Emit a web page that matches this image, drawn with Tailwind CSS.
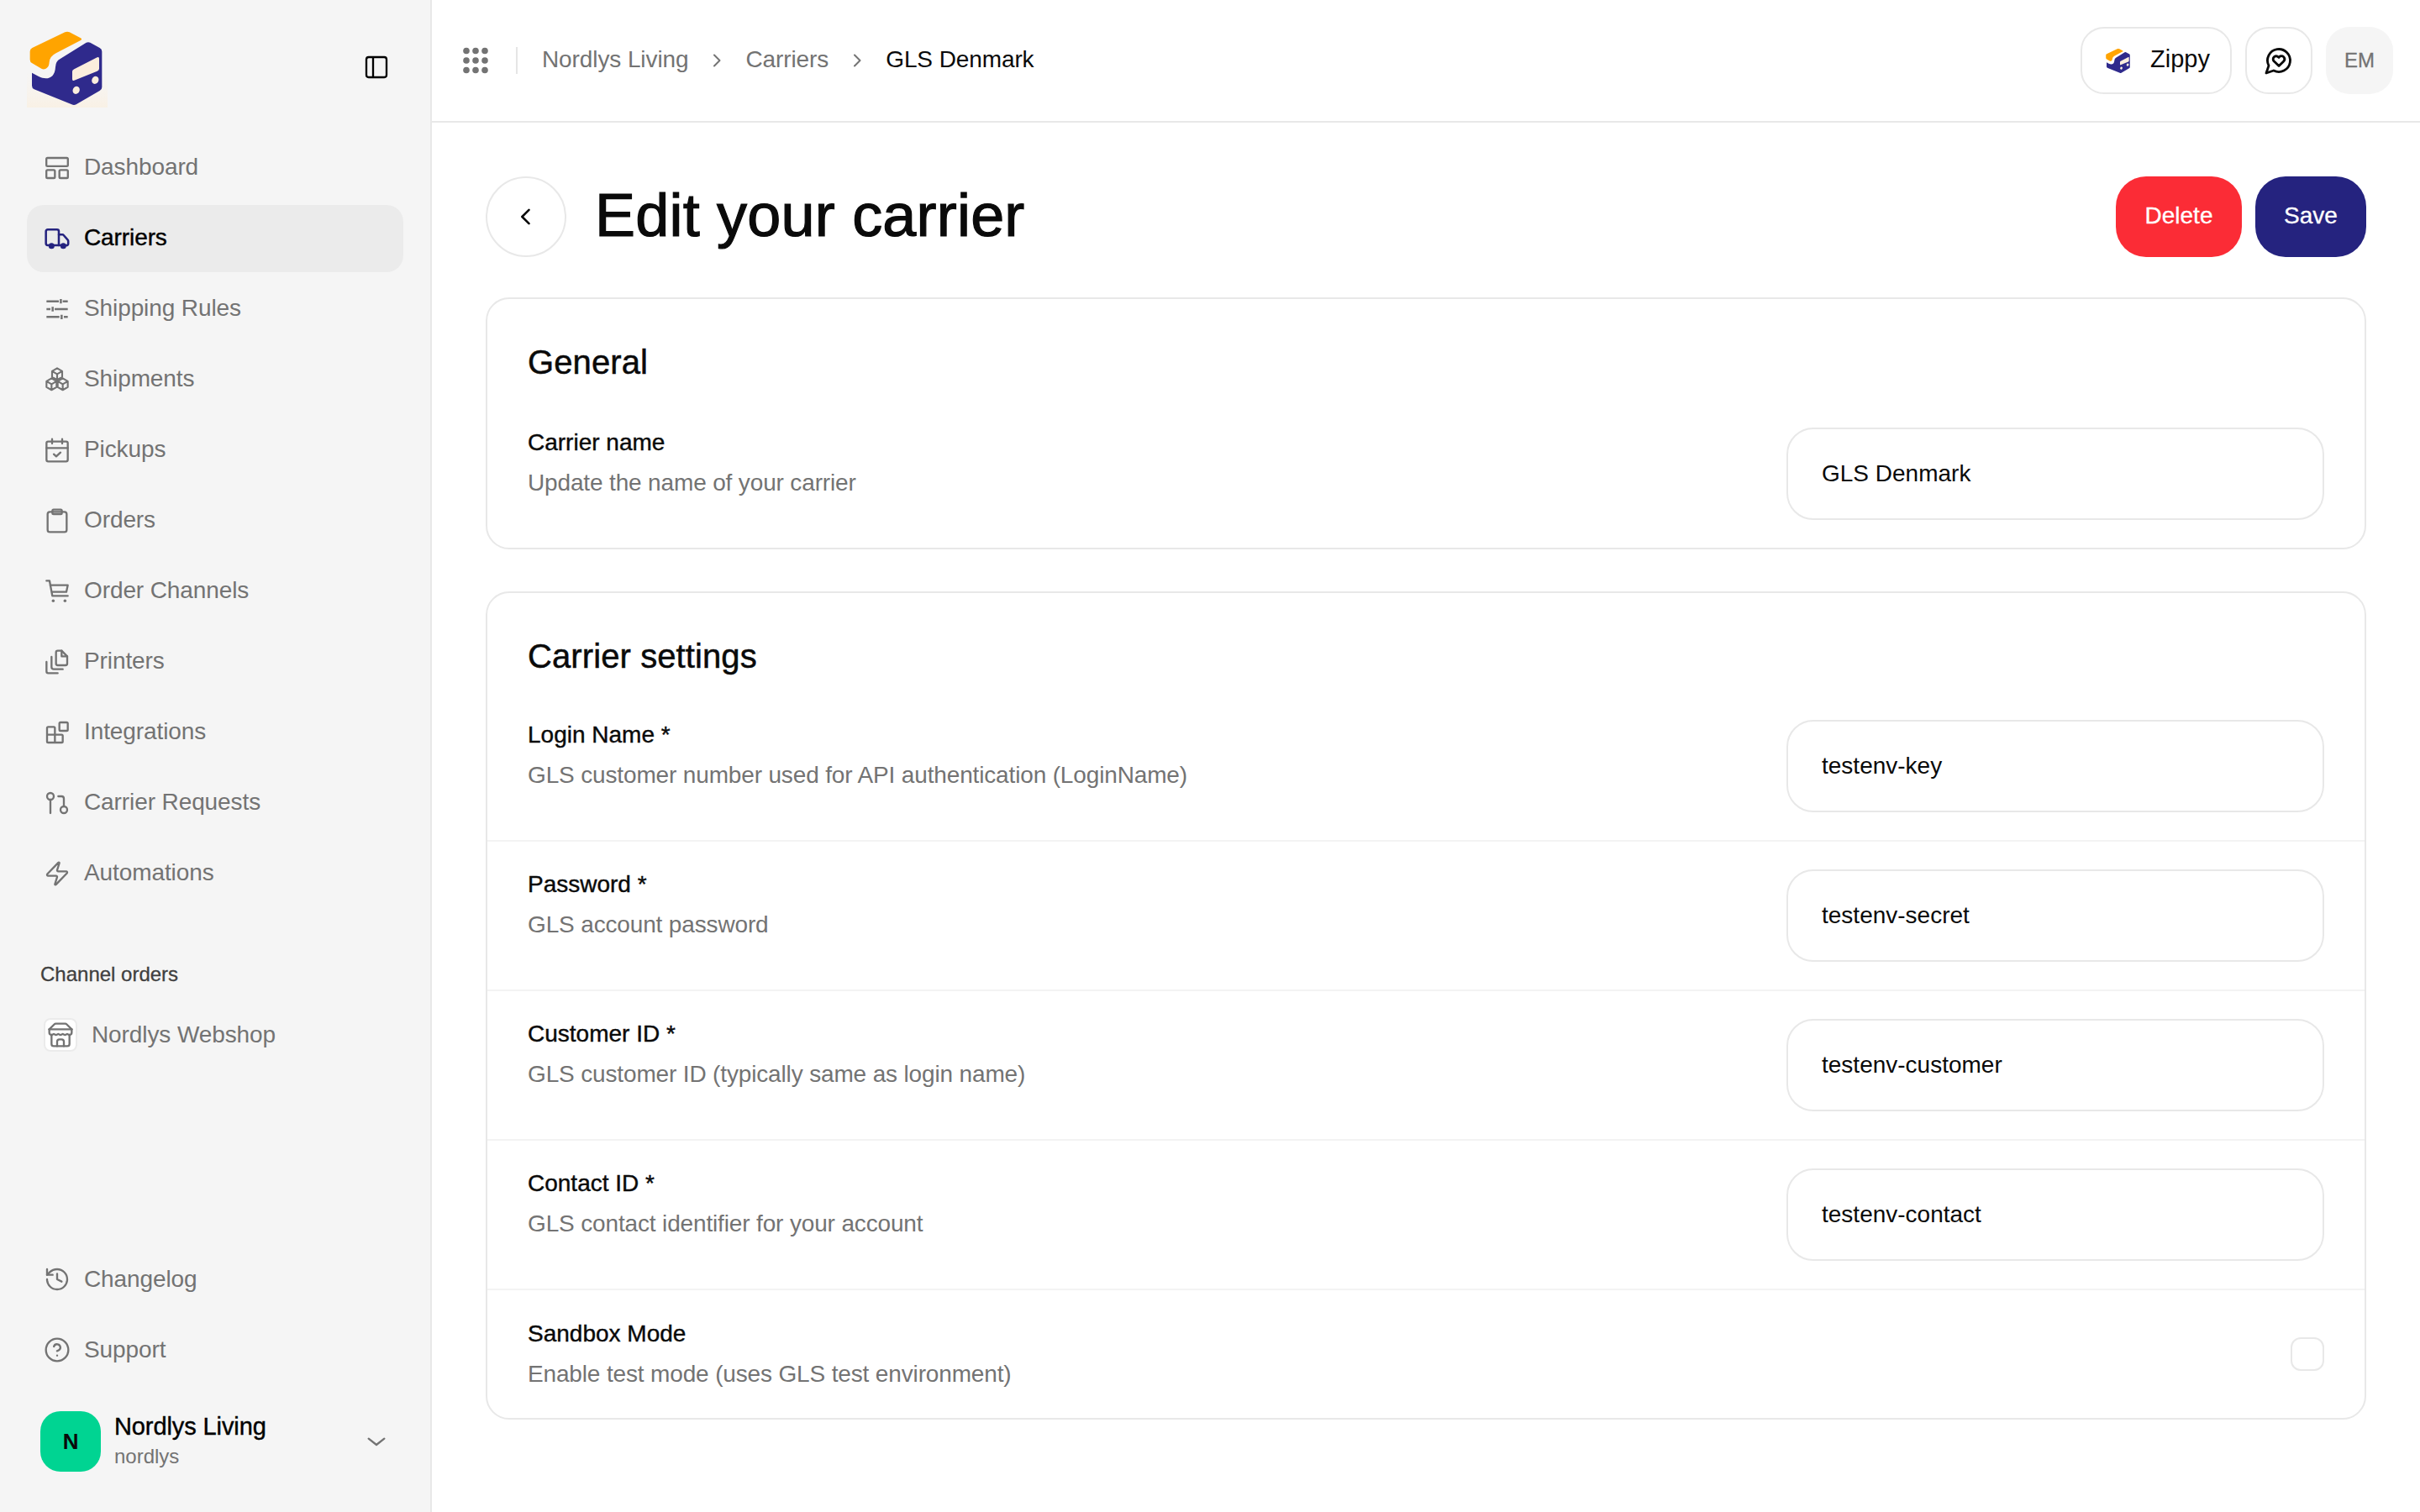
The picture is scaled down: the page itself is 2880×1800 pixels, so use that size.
<!DOCTYPE html>
<html lang="en">
<head>
<meta charset="utf-8">
<title>Edit your carrier</title>
<script src="https://cdn.jsdelivr.net/npm/@tailwindcss/browser@4"></script>
</head>
<body class="bg-white text-[#0a0a0a] [font-family:'Liberation_Sans',sans-serif]">
<svg width="0" height="0" class="absolute">
  <defs>
    <linearGradient id="glow" x1="0" y1="0" x2="0" y2="1"><stop offset="0.5" stop-color="#fdf3e4" stop-opacity="0"/><stop offset="1" stop-color="#fcedd8" stop-opacity="0.55"/></linearGradient>
    <symbol id="logo-mark" viewBox="0 0 360 360">
      <path fill="#ffa400" d="M172 55q8-4 16 0l40 21q7 4 0 8l-88 46q-22 11-24 32c-1 14-5 20-14 24q-7 3-14-1l-33-19q-8-4-8-13v-29q0-9 8-13z"/>
      <path fill="#2f2a8c" d="M248 92q7-3 14 0l34 19q8 4 8 13v127q0 9-8 13l-84 49q-8 4-16 0L62 259q-8-4-8-13v-46l24 13c28 14 58 8 60-34q1-20 16-28z"/>
      <path fill="#fbeedd" d="M205 187l82-42q7-3 7 4v36q0 6-7 9l-82 33q-7 3-7-4v-28q0-5 7-8z"/>
      <ellipse cx="212" cy="262" rx="12" ry="14" transform="rotate(28 212 262)" fill="#fbeedd"/>
      <ellipse cx="280" cy="226" rx="12" ry="14" transform="rotate(28 280 226)" fill="#fbeedd"/>
    </symbol>
  </defs>
</svg>
<div class="flex h-screen w-full overflow-hidden">
  <aside class="flex h-full w-[514px] shrink-0 flex-col border-r-2 border-[#e8e8e8] bg-[#f5f5f5] px-[32px] pb-[48px] text-[28px] tracking-[-0.1px] text-[#737373]">
    <div class="flex h-[160px] shrink-0 items-start justify-between pt-[20px]">
      <svg class="ml-[-12px] h-[120px] w-[120px]" viewBox="0 0 360 360"><rect x="36" y="60" width="288" height="264" fill="url(#glow)"/><use href="#logo-mark" width="360" height="360"/></svg>
      <button class="mr-[16px] mt-[44px] flex h-[32px] w-[32px] items-center justify-center text-black">
        <svg class="h-[32px] w-[32px]" viewBox="0 0 24 24" fill="none" stroke="currentColor" stroke-width="1.75" stroke-linejoin="round"><rect x="3" y="3" width="18" height="18" rx="2"/><path d="M9 3v18"/></svg>
      </button>
    </div>
    <nav class="flex shrink-0 flex-col gap-[4px] [&_span]:pb-[2px]">
      <a class="flex h-[80px] items-center gap-[16px] rounded-[20px] pl-[20px]">
        <svg class="h-[32px] w-[32px]" viewBox="0 0 24 24" fill="none" stroke="currentColor" stroke-width="1.75" stroke-linejoin="round"><rect x="2.4" y="3" width="19.2" height="7.4" rx="1"/><rect x="2.4" y="13.8" width="7.6" height="7.2" rx="1"/><rect x="14" y="13.8" width="7.6" height="7.2" rx="1"/></svg>
        <span>Dashboard</span>
      </a>
      <a class="flex h-[80px] items-center gap-[16px] rounded-[20px] bg-[#ebebeb] pl-[20px] text-black [-webkit-text-stroke:0.4px_currentColor]">
        <svg class="h-[32px] w-[32px] text-[#25237f]" viewBox="0 0 24 24" fill="none" stroke="currentColor" stroke-width="1.9" stroke-linecap="round" stroke-linejoin="round"><path d="M5 18H3.6A1.6 1.6 0 0 1 2 16.400V5.600A1.600 1.600 0 0 1 3.600 4h8.300A1.600 1.600 0 0 1 13.500 5.600V18"/><path d="M13.500 8.500h3.200a1.500 1.500 0 0 1 1.100.500l3.700 4.200a1.500 1.500 0 0 1 .4 1v2.400a1.500 1.500 0 0 1-1.500 1.500H20"/><path d="M9 18h7"/><circle cx="7" cy="18.500" r="1.700" fill="currentColor"/><circle cx="17.500" cy="18.500" r="1.700" fill="currentColor"/></svg>
        <span>Carriers</span>
      </a>
      <a class="flex h-[80px] items-center gap-[16px] rounded-[20px] pl-[20px]">
        <svg class="h-[32px] w-[32px]" viewBox="0 0 24 24" fill="none" stroke="currentColor" stroke-width="1.9"><path d="M2.500 5H13.500M17 5h4.500M15.300 3v4M2.500 12H6M9.800 12h11.700M8 10v4M2.500 19H14M18 19h3.500M16 17v4"/></svg>
        <span>Shipping Rules</span>
      </a>
      <a class="flex h-[80px] items-center gap-[16px] rounded-[20px] pl-[20px]">
        <svg class="h-[32px] w-[32px]" viewBox="0 0 24 24" fill="none" stroke="currentColor" stroke-width="1.6" stroke-linejoin="round"><path d="M12 1.800L16.500 4.400V9.600L12 12.200L7.500 9.600V4.400ZM7.500 4.400L12 7L16.500 4.400M12 7V12.200"/><path d="M7 10.800L11.500 13.400V18.600L7 21.200L2.500 18.600V13.400ZM2.500 13.400L7 16L11.500 13.400M7 16V21.200"/><path d="M17 10.800L21.500 13.400V18.600L17 21.200L12.500 18.600V13.400ZM12.500 13.400L17 16L21.500 13.400M17 16V21.200"/></svg>
        <span>Shipments</span>
      </a>
      <a class="flex h-[80px] items-center gap-[16px] rounded-[20px] pl-[20px]">
        <svg class="h-[32px] w-[32px]" viewBox="0 0 24 24" fill="none" stroke="currentColor" stroke-width="1.75" stroke-linecap="round" stroke-linejoin="round"><rect x="2.500" y="4.200" width="19" height="17.800" rx="1.500"/><path d="M2.500 10h19M7.500 2v4M16.500 2v4M9 15.500l2.200 2 3.800-3.500"/></svg>
        <span>Pickups</span>
      </a>
      <a class="flex h-[80px] items-center gap-[16px] rounded-[20px] pl-[20px]">
        <svg class="h-[32px] w-[32px]" viewBox="0 0 24 24" fill="none" stroke="currentColor" stroke-width="1.75" stroke-linejoin="round"><rect x="3.500" y="4" width="17" height="18" rx="2"/><rect x="7.800" y="2" width="8.400" height="4" rx="1"/></svg>
        <span>Orders</span>
      </a>
      <a class="flex h-[80px] items-center gap-[16px] rounded-[20px] pl-[20px]">
        <svg class="h-[32px] w-[32px]" viewBox="0 0 24 24" fill="none" stroke="currentColor" stroke-width="1.75" stroke-linecap="round" stroke-linejoin="round"><path d="M2.500 2.500h2.700l2.500 13.500h13.800M5.800 6.500h15.700l-1.300 6H7"/><circle cx="8.500" cy="20.500" r="1.300" fill="currentColor" stroke="none"/><circle cx="19" cy="20.500" r="1.300" fill="currentColor" stroke="none"/></svg>
        <span>Order Channels</span>
      </a>
      <a class="flex h-[80px] items-center gap-[16px] rounded-[20px] pl-[20px]">
        <svg class="h-[32px] w-[32px]" viewBox="0 0 24 24" fill="none" stroke="currentColor" stroke-width="1.75" stroke-linecap="round" stroke-linejoin="round"><path d="M11 3.500A1.500 1.500 0 0 1 12.500 2H16l5 5v6.500a1.500 1.500 0 0 1-1.500 1.500h-7A1.500 1.500 0 0 1 11 13.500z"/><path d="M16 2v5h5"/><path d="M7 7.500v9a2 2 0 0 0 2 2h8"/><path d="M2.500 12v8.500A1.500 1.500 0 0 0 4 22h8.500"/></svg>
        <span>Printers</span>
      </a>
      <a class="flex h-[80px] items-center gap-[16px] rounded-[20px] pl-[20px]">
        <svg class="h-[32px] w-[32px]" viewBox="0 0 24 24" fill="none" stroke="currentColor" stroke-width="1.75" stroke-linecap="round" stroke-linejoin="round"><rect x="14" y="3" width="7.500" height="7.500" rx="1"/><path d="M10 21V8a1 1 0 0 0-1-1H4a1 1 0 0 0-1 1v12a1 1 0 0 0 1 1h12a1 1 0 0 0 1-1v-5a1 1 0 0 0-1-1H3"/></svg>
        <span>Integrations</span>
      </a>
      <a class="flex h-[80px] items-center gap-[16px] rounded-[20px] pl-[20px]">
        <svg class="h-[32px] w-[32px]" viewBox="0 0 24 24" fill="none" stroke="currentColor" stroke-width="1.75" stroke-linecap="round" stroke-linejoin="round"><circle cx="18" cy="18" r="3"/><circle cx="6" cy="6" r="3"/><path d="M13 6h3a2 2 0 0 1 2 2v7"/><path d="M6 9v12"/></svg>
        <span>Carrier Requests</span>
      </a>
      <a class="flex h-[80px] items-center gap-[16px] rounded-[20px] pl-[20px]">
        <svg class="h-[32px] w-[32px]" viewBox="0 0 24 24" fill="none" stroke="currentColor" stroke-width="1.75" stroke-linecap="round" stroke-linejoin="round"><path d="M4 14a1 1 0 0 1-.78-1.630l9.900-10.200a.5.5 0 0 1 .86.460l-1.920 6.020A1 1 0 0 0 13 10h7a1 1 0 0 1 .78 1.630l-9.900 10.200a.5.5 0 0 1-.86-.460l1.920-6.020A1 1 0 0 0 11 14z"/></svg>
        <span>Automations</span>
      </a>
    </nav>
    <div class="mt-[62px] shrink-0 pl-[16px] text-[24px] tracking-normal text-[#404040] [-webkit-text-stroke:0.3px_currentColor]">Channel orders</div>
    <a class="mt-[14px] flex h-[80px] shrink-0 items-center gap-[17px] pl-[20px]">
      <span class="flex h-[40px] w-[40px] items-center justify-center rounded-[8px] border-2 border-[#ebebeb] bg-white">
        <svg class="h-[32px] w-[32px] shrink-0" viewBox="0 0 24 24" fill="none" stroke="currentColor" stroke-width="1.75" stroke-linecap="round" stroke-linejoin="round"><path d="M2 7l4.410-4.410A2 2 0 0 1 7.830 2h8.340a2 2 0 0 1 1.420.590L22 7"/><path d="M4 12v8a2 2 0 0 0 2 2h12a2 2 0 0 0 2-2v-8"/><path d="M15 22v-4a2 2 0 0 0-2-2h-2a2 2 0 0 0-2 2v4"/><path d="M2 7h20"/><path d="M22 7v3a2 2 0 0 1-2 2a2.700 2.700 0 0 1-1.590-.630.700.700 0 0 0-.820 0A2.700 2.700 0 0 1 16 12a2.700 2.700 0 0 1-1.590-.630.700.700 0 0 0-.820 0A2.700 2.700 0 0 1 12 12a2.700 2.700 0 0 1-1.590-.630.700.700 0 0 0-.820 0A2.700 2.700 0 0 1 8 12a2.700 2.700 0 0 1-1.590-.630.700.700 0 0 0-.820 0A2.700 2.700 0 0 1 4 12a2 2 0 0 1-2-2V7"/></svg>
      </span>
      <span>Nordlys Webshop</span>
    </a>
    <div class="flex-1"></div>
    <div class="flex shrink-0 flex-col gap-[4px] [&_span]:pb-[1px]">
      <a class="flex h-[80px] items-center gap-[16px] pl-[20px]">
        <svg class="h-[32px] w-[32px]" viewBox="0 0 24 24" fill="none" stroke="currentColor" stroke-width="1.75" stroke-linecap="round" stroke-linejoin="round"><path d="M3 12a9 9 0 1 0 9-9 9.750 9.750 0 0 0-6.740 2.740L3 8"/><path d="M3 3v5h5"/><path d="M12 7v5l4 2"/></svg>
        <span>Changelog</span>
      </a>
      <a class="flex h-[80px] items-center gap-[16px] pl-[20px]">
        <svg class="h-[32px] w-[32px]" viewBox="0 0 24 24" fill="none" stroke="currentColor" stroke-width="1.75" stroke-linecap="round" stroke-linejoin="round"><circle cx="12" cy="12" r="10"/><path d="M9.090 9a3 3 0 0 1 5.830 1c0 2-3 3-3 3"/><path d="M12 17h.01"/></svg>
        <span>Support</span>
      </a>
    </div>
    <div class="mt-[33px] flex h-[72px] shrink-0 items-center pl-[16px]">
      <span class="flex h-[72px] w-[72px] items-center justify-center rounded-[24px] bg-[#00d492] text-[26px] font-bold text-[#0a0a0a]">N</span>
      <span class="ml-[16px] flex flex-1 flex-col">
        <span class="text-[29px] leading-[36px] text-black [-webkit-text-stroke:0.4px_currentColor]">Nordlys Living</span>
        <span class="text-[24px] leading-[36px] tracking-normal">nordlys</span>
      </span>
      <svg class="mr-[16px] h-[32px] w-[32px]" viewBox="0 0 24 24" fill="none" stroke="currentColor" stroke-width="1.75" stroke-linecap="round" stroke-linejoin="round"><path d="M5 9.500l7 5.500 7-5.500"/></svg>
    </div>
  </aside>

  <div class="flex min-w-0 flex-1 flex-col">
    <header class="flex h-[146px] shrink-0 items-center justify-between border-b-2 border-[#e8e8e8] pl-[36px] pr-[32px]">
      <div class="flex items-center text-[28px] tracking-[-0.1px] text-[#737373]">
        <svg class="h-[32px] w-[32px]" viewBox="0 0 32 32" fill="#737373"><circle cx="5" cy="4.500" r="3.800"/><circle cx="16" cy="4.500" r="3.800"/><circle cx="27" cy="4.500" r="3.800"/><circle cx="5" cy="16" r="3.800"/><circle cx="16" cy="16" r="3.800"/><circle cx="27" cy="16" r="3.800"/><circle cx="5" cy="27.500" r="3.800"/><circle cx="16" cy="27.500" r="3.800"/><circle cx="27" cy="27.500" r="3.800"/></svg>
        <span class="ml-[32px] h-[32px] w-[2px] bg-[#e5e5e5]"></span>
        <span class="ml-[29px] pb-[2px]">Nordlys Living</span>
        <svg class="mx-[22px] h-[24px] w-[24px]" viewBox="0 0 24 24" fill="none" stroke="currentColor" stroke-width="2" stroke-linecap="round" stroke-linejoin="round"><path d="M9 5.500l6.500 6.500L9 18.500"/></svg>
        <span class="pb-[2px]">Carriers</span>
        <svg class="mx-[22px] h-[24px] w-[24px]" viewBox="0 0 24 24" fill="none" stroke="currentColor" stroke-width="2" stroke-linecap="round" stroke-linejoin="round"><path d="M9 5.500l6.500 6.500L9 18.500"/></svg>
        <span class="pb-[2px] text-[#0a0a0a]">GLS Denmark</span>
      </div>
      <div class="flex items-center gap-[16px]">
        <button class="flex h-[80px] w-[180px] items-center gap-[18px] rounded-[28px] border-2 border-[#e8e8e8] pl-[23px] text-[29px] text-[#0a0a0a]">
          <svg class="h-[40px] w-[40px]" viewBox="0 0 360 360"><use href="#logo-mark" width="360" height="360"/></svg>
          <span class="pb-[2px]">Zippy</span>
        </button>
        <button class="flex h-[80px] w-[80px] items-center justify-center rounded-[28px] border-2 border-[#e8e8e8]">
          <svg class="h-[36px] w-[36px]" viewBox="0 0 24 24" fill="none" stroke="#0a0a0a" stroke-width="1.900" stroke-linecap="round" stroke-linejoin="round"><path d="M7.900 20A9 9 0 1 0 4 16.100L2 22Z"/><path d="M15.800 9.200a2.500 2.500 0 0 0-3.500 0l-.3.4-.35-.3a2.420 2.420 0 1 0-3.200 3.600l3.600 3.500 3.600-3.500c1.200-1.200 1.100-2.700.2-3.700"/></svg>
        </button>
        <span class="flex h-[80px] w-[80px] items-center justify-center rounded-[28px] bg-[#f5f5f5] text-[24px] text-[#737373] [-webkit-text-stroke:0.3px_currentColor]">EM</span>
      </div>
    </header>

    <main class="flex min-h-0 flex-1 flex-col px-[64px] pt-[64px]">
      <div class="flex h-[96px] items-center justify-between">
        <div class="flex items-center gap-[34px]">
          <button class="flex h-[96px] w-[96px] items-center justify-center rounded-full border-2 border-[#e8e8e8]">
            <svg class="h-[28px] w-[28px]" viewBox="0 0 24 24" fill="none" stroke="#0a0a0a" stroke-width="2.200" stroke-linecap="round" stroke-linejoin="round"><path d="M15 5l-7 7 7 7"/></svg>
          </button>
          <h1 class="pb-[4px] text-[72px] leading-[92px] tracking-[0.2px] [-webkit-text-stroke:1.2px_currentColor]">Edit your carrier</h1>
        </div>
        <div class="flex items-center gap-[16px] text-[28px] text-white [-webkit-text-stroke:0.3px_currentColor]">
          <button class="flex h-[96px] w-[150px] items-center justify-center rounded-[36px] bg-[#fb2c36] pb-[2px]">Delete</button>
          <button class="flex h-[96px] w-[132px] items-center justify-center rounded-[36px] bg-[#25237f] pb-[2px]">Save</button>
        </div>
      </div>

      <section class="mt-[48px] rounded-[28px] border-2 border-[#e8e8e8]">
        <h2 class="flex h-[120px] items-end pb-[19px] pl-[48px] text-[40px] leading-[52px] tracking-[0.1px] [-webkit-text-stroke:0.5px_currentColor]">General</h2>
        <div class="flex items-start justify-between px-[48px] pb-[33px] pt-[33px]">
          <div class="text-[28px] leading-[36px]">
            <p class="[-webkit-text-stroke:0.4px_currentColor]">Carrier name</p>
            <p class="mt-[12px] tracking-[-0.15px] text-[#737373]">Update the name of your carrier</p>
          </div>
          <div class="flex h-[110px] w-[640px] items-center rounded-[32px] border-2 border-[#e8e8e8] pl-[40px] text-[28px]">GLS Denmark</div>
        </div>
      </section>

      <section class="mt-[50px] rounded-[28px] border-2 border-[#e8e8e8]">
        <h2 class="flex h-[118px] items-end pb-[17px] pl-[48px] text-[40px] leading-[52px] tracking-[0.1px] [-webkit-text-stroke:0.5px_currentColor]">Carrier settings</h2>
        <div class="flex items-start justify-between border-b-2 border-[#f3f3f3] px-[48px] py-[33px]">
          <div class="text-[28px] leading-[36px]">
            <p class="[-webkit-text-stroke:0.4px_currentColor]">Login Name *</p>
            <p class="mt-[12px] tracking-[-0.15px] text-[#737373]">GLS customer number used for API authentication (LoginName)</p>
          </div>
          <div class="flex h-[110px] w-[640px] items-center rounded-[32px] border-2 border-[#e8e8e8] pl-[40px] text-[28px]">testenv-key</div>
        </div>
        <div class="flex items-start justify-between border-b-2 border-[#f3f3f3] px-[48px] py-[33px]">
          <div class="text-[28px] leading-[36px]">
            <p class="[-webkit-text-stroke:0.4px_currentColor]">Password *</p>
            <p class="mt-[12px] tracking-[-0.15px] text-[#737373]">GLS account password</p>
          </div>
          <div class="flex h-[110px] w-[640px] items-center rounded-[32px] border-2 border-[#e8e8e8] pl-[40px] text-[28px]">testenv-secret</div>
        </div>
        <div class="flex items-start justify-between border-b-2 border-[#f3f3f3] px-[48px] py-[33px]">
          <div class="text-[28px] leading-[36px]">
            <p class="[-webkit-text-stroke:0.4px_currentColor]">Customer ID *</p>
            <p class="mt-[12px] tracking-[-0.15px] text-[#737373]">GLS customer ID (typically same as login name)</p>
          </div>
          <div class="flex h-[110px] w-[640px] items-center rounded-[32px] border-2 border-[#e8e8e8] pl-[40px] text-[28px]">testenv-customer</div>
        </div>
        <div class="flex items-start justify-between border-b-2 border-[#f3f3f3] px-[48px] py-[33px]">
          <div class="text-[28px] leading-[36px]">
            <p class="[-webkit-text-stroke:0.4px_currentColor]">Contact ID *</p>
            <p class="mt-[12px] tracking-[-0.15px] text-[#737373]">GLS contact identifier for your account</p>
          </div>
          <div class="flex h-[110px] w-[640px] items-center rounded-[32px] border-2 border-[#e8e8e8] pl-[40px] text-[28px]">testenv-contact</div>
        </div>
        <div class="flex items-center justify-between px-[48px] pb-[34px] pt-[34px]">
          <div class="text-[28px] leading-[36px]">
            <p class="[-webkit-text-stroke:0.4px_currentColor]">Sandbox Mode</p>
            <p class="mt-[12px] tracking-[-0.15px] text-[#737373]">Enable test mode (uses GLS test environment)</p>
          </div>
          <span class="h-[40px] w-[40px] rounded-[12px] border-2 border-[#e8e8e8]"></span>
        </div>
      </section>
    </main>
  </div>
</div>
</body>
</html>
